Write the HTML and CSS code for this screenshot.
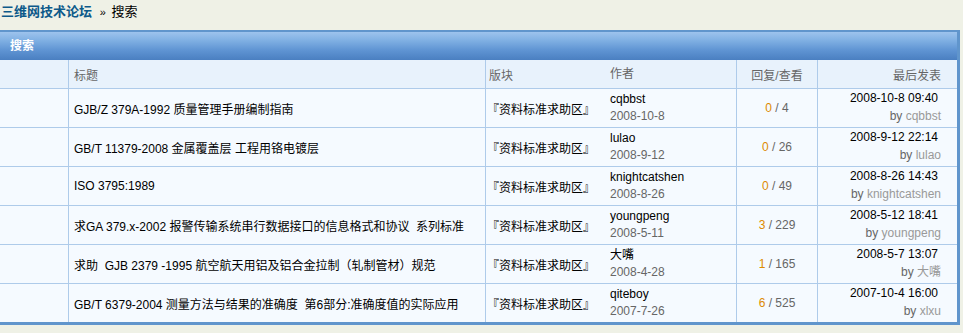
FILE: index.html
```html
<!DOCTYPE html>
<html>
<head>
  <meta charset="utf-8">
  <title>搜索 - 三维网技术论坛</title>
  <link rel="stylesheet" href="styles.css">
</head>
<body>

  <div class="nav">
    <a href="#">三维网技术论坛</a> <span class="sep">&raquo;</span> 搜索
  </div>

  <div class="mainbox">
    <h3>搜索</h3>
    <table>
      <thead>
        <tr>
          <td class="icon">&nbsp;</td>
          <td class="subject">标题</td>
          <td class="forum">版块</td>
          <td class="author">作者</td>
          <td class="nums">回复/查看</td>
          <td class="lastpost">最后发表</td>
        </tr>
      </thead>
      <tbody>
        <tr>
          <td class="icon">&nbsp;</td>
          <td class="subject">GJB/Z 379A-1992 质量管理手册编制指南</td>
          <td class="forum">『资料标准求助区』</td>
          <td class="author">cqbbst<em>2008-10-8</em></td>
          <td class="nums"><strong>0</strong> / 4</td>
          <td class="lastpost"><span class="time">2008-10-8 09:40</span><cite>by <a href="#">cqbbst</a></cite></td>
        </tr>
        <tr>
          <td class="icon">&nbsp;</td>
          <td class="subject">GB/T 11379-2008 金属覆盖层 工程用铬电镀层</td>
          <td class="forum">『资料标准求助区』</td>
          <td class="author">lulao<em>2008-9-12</em></td>
          <td class="nums"><strong>0</strong> / 26</td>
          <td class="lastpost"><span class="time">2008-9-12 22:14</span><cite>by <a href="#">lulao</a></cite></td>
        </tr>
        <tr>
          <td class="icon">&nbsp;</td>
          <td class="subject">ISO 3795:1989</td>
          <td class="forum">『资料标准求助区』</td>
          <td class="author">knightcatshen<em>2008-8-26</em></td>
          <td class="nums"><strong>0</strong> / 49</td>
          <td class="lastpost"><span class="time">2008-8-26 14:43</span><cite>by <a href="#">knightcatshen</a></cite></td>
        </tr>
        <tr>
          <td class="icon">&nbsp;</td>
          <td class="subject">求GA 379.x-2002 报警传输系统串行数据接口的信息格式和协议&nbsp; 系列标准</td>
          <td class="forum">『资料标准求助区』</td>
          <td class="author">youngpeng<em>2008-5-11</em></td>
          <td class="nums"><strong>3</strong> / 229</td>
          <td class="lastpost"><span class="time">2008-5-12 18:41</span><cite>by <a href="#">youngpeng</a></cite></td>
        </tr>
        <tr>
          <td class="icon">&nbsp;</td>
          <td class="subject">求助&nbsp; GJB 2379 -1995 航空航天用铝及铝合金拉制（轧制管材）规范</td>
          <td class="forum">『资料标准求助区』</td>
          <td class="author">大嘴<em>2008-4-28</em></td>
          <td class="nums"><strong>1</strong> / 165</td>
          <td class="lastpost"><span class="time">2008-5-7 13:07</span><cite>by <a href="#">大嘴</a></cite></td>
        </tr>
        <tr>
          <td class="icon">&nbsp;</td>
          <td class="subject">GB/T 6379-2004 测量方法与结果的准确度&nbsp; 第6部分:准确度值的实际应用</td>
          <td class="forum">『资料标准求助区』</td>
          <td class="author">qiteboy<em>2007-7-26</em></td>
          <td class="nums"><strong>6</strong> / 525</td>
          <td class="lastpost"><span class="time">2007-10-4 16:00</span><cite>by <a href="#">xlxu</a></cite></td>
        </tr>
      </tbody>
    </table>
  </div>

</body>
</html>
```

FILE: styles.css
```css
body {
  margin: 0;
  background: #eff1e6;
  font-family: "Liberation Sans", Arial, "Noto Sans CJK SC", sans-serif;
  font-size: 12px;
  color: #000;
}
a {
  text-decoration: none;
}
.nav {
  height: 24px;
  line-height: 24px;
  padding: 0 0 6px 1px;
  font-size: 13px;
}
.nav a {
  color: #0d5a8a;
  font-weight: bold;
}
.nav .sep {
  font-size: 11px;
  margin: 0 2px 0 4px;
}
.mainbox {
  width: 957px;
  border: 3px solid #6095cc;
  border-top-width: 2px;
  border-left: none;
  background: #f5faff;
}
.mainbox h3 {
  margin: 0;
  height: 28px;
  line-height: 28px;
  padding-left: 10px;
  font-size: 12px;
  color: #fff;
  background: linear-gradient(#9dc3ed, #80b0e3 30%, #5f94d3 65%, #4a7fc1);
}
table {
  width: 100%;
  border-collapse: collapse;
  table-layout: fixed;
}
td {
  padding: 0;
  vertical-align: middle;
  border-top: 1px solid #aecbea;
}
thead td {
  height: 27px;
  padding-top: 1px;
  background: #e8f2fc;
  color: #666;
  border-top: none;
}
tbody td {
  height: 38px;
}
td.icon {
  width: 68px;
  border-right: 1px solid #aecbea;
}
td.subject {
  width: 411px;
  padding-left: 5px;
  white-space: nowrap;
  border-right: 1px solid #aecbea;
}
td.forum {
  width: 121px;
  padding-left: 1px;
}
thead td.forum {
  padding-left: 3px;
  width: 119px;
}
td.author {
  width: 126px;
  padding-left: 2px;
  line-height: 17px;
  border-right: 1px solid #aecbea;
}
td.author em {
  display: block;
  font-style: normal;
  color: #666;
}
td.nums {
  width: 80px;
  text-align: center;
  color: #666;
  border-right: 1px solid #aecbea;
}
td.nums strong {
  font-weight: normal;
  color: #dd8a00;
}
td.lastpost {
  text-align: right;
  padding-right: 16px;
}
td.lastpost .time {
  display: block;
  line-height: 17px;
  padding-right: 3px;
}
td.lastpost cite {
  display: block;
  font-style: normal;
  line-height: 19px;
  color: #666;
}
td.lastpost cite a {
  color: #999;
}
```
